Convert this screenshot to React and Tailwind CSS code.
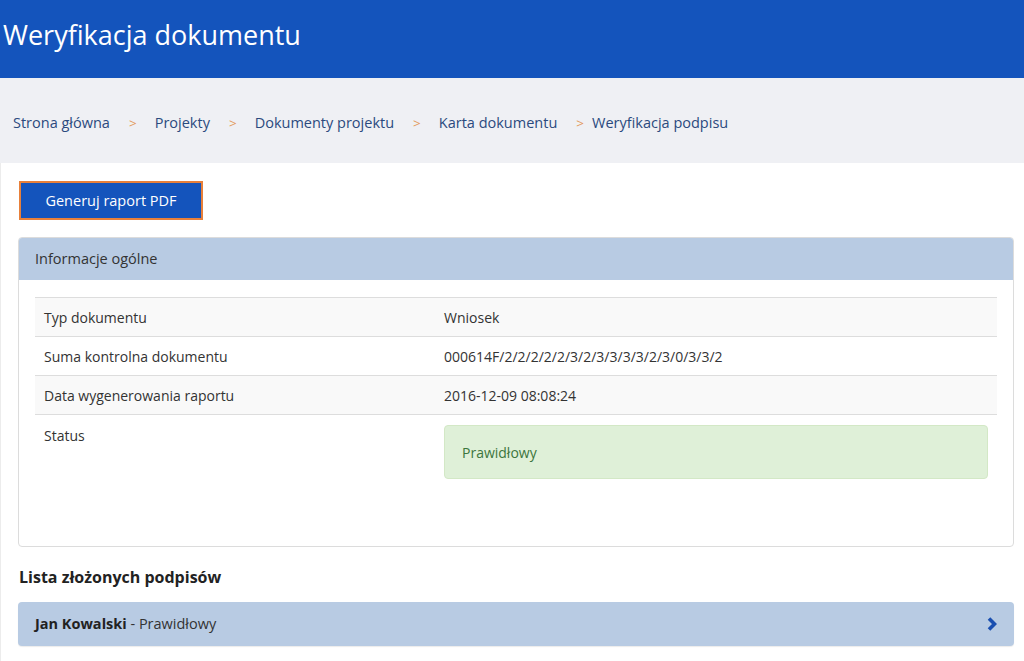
export default function App() {
  const crumbs = ["Strona główna", "Projekty", "Dokumenty projektu", "Karta dokumentu", "Weryfikacja podpisu"];
  const rows = [
    ["Typ dokumentu", "Wniosek"],
    ["Suma kontrolna dokumentu", "000614F/2/2/2/2/2/3/2/3/3/3/3/2/3/0/3/3/2"],
    ["Data wygenerowania raportu", "2016-12-09 08:08:24"],
  ];
  return (
    <div className="min-h-screen bg-white text-[#333]" style={{ fontFamily: '"Open Sans", "Noto Sans", sans-serif' }}>
      <header className="h-[78px] bg-[#1454bc] flex items-center px-[3px]">
        <h1 className="text-[27px] text-white leading-none pb-[9px]">Weryfikacja dokumentu</h1>
      </header>
      <nav className="h-[85px] bg-[#eff0f4] flex items-center pl-[13px] pt-[5px] text-[14.5px] text-[#2b4a7e]">
        {crumbs.map((c, i) => (
          <span key={c} className="flex items-center">
            {i > 0 && (
              <span className={`text-[#e39a5c] text-[13.5px] pl-[19px] ${i === crumbs.length - 1 ? "pr-[8px]" : "pr-[18px]"}`}>
                &gt;
              </span>
            )}
            <span>{c}</span>
          </span>
        ))}
      </nav>
      <main className="pl-[18px] pr-[10px] pt-[18px] pb-4 border-l border-[#ececec]">
        <button className="w-[184px] h-[39px] bg-[#1454bc] border-2 border-[#e8803a] text-white text-[14.5px]">
          Generuj raport PDF
        </button>
        <section className="mt-[17px] -ml-px border border-[#dcdcdc] rounded-[4px] overflow-hidden">
          <div className="h-[42px] bg-[#b8cbe3] flex items-center px-[16px] text-[14.5px] text-[#333]">
            Informacje ogólne
          </div>
          <div className="px-[16px] pt-[17px] pb-[67px]">
            <table className="w-full text-[14px] border-collapse">
              <tbody>
                {rows.map(([k, v], i) => (
                  <tr key={k} className={`border-t border-[#dddddd] ${i % 2 === 0 ? "bg-[#f9f9f9]" : "bg-white"}`}>
                    <td className="w-[409px] h-[39px] px-[9px] align-middle">{k}</td>
                    <td className="px-0 align-middle">{v}</td>
                  </tr>
                ))}
                <tr className="border-t border-[#dddddd]">
                  <td className="px-[9px] pt-[10px] align-top">Status</td>
                  <td className="pt-[10px] pr-[9px]">
                    <div className="h-[54px] bg-[#dff0d8] border border-[#d3e8c6] rounded-[4px] flex items-center px-[17px] text-[#3c763d]">
                      Prawidłowy
                    </div>
                  </td>
                </tr>
              </tbody>
            </table>
          </div>
        </section>
        <h2 className="mt-[18px] text-[16px] font-bold text-[#222]">Lista złożonych podpisów</h2>
        <div className="mt-[13px] -ml-px h-[44px] bg-[#b8cbe3] rounded-[4px] flex items-center justify-between pl-[17px] pr-[17px] text-[14.5px] shadow-[0_1px_1px_rgba(0,0,0,0.08)]">
          <span>
            <b className="text-[#222]">Jan Kowalski</b> - Prawidłowy
          </span>
          <svg width="10" height="14" viewBox="0 0 10 14">
            <path d="M2 1.5 L7.5 7 L2 12.5" fill="none" stroke="#1a4fb0" strokeWidth="3.6" strokeLinejoin="miter" />
          </svg>
        </div>
      </main>
    </div>
  );
}
